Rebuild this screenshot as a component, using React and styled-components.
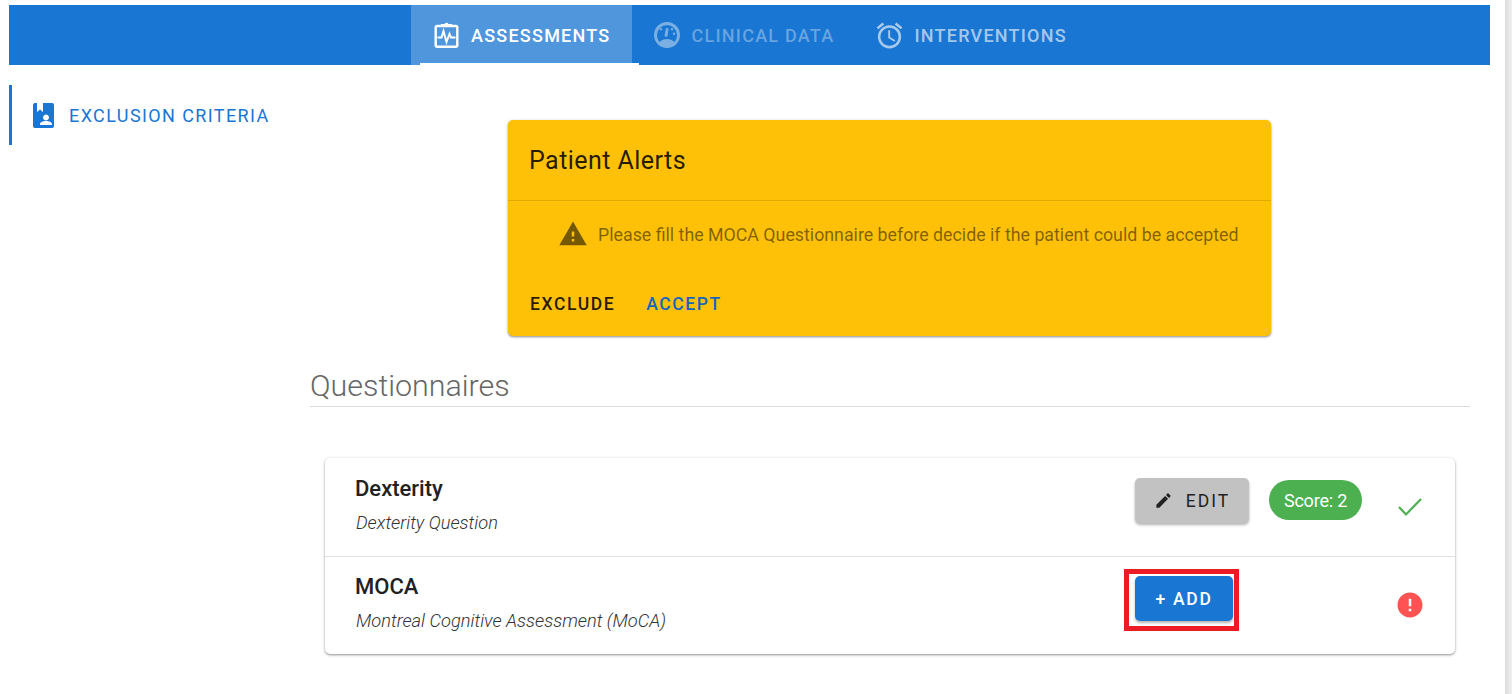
import React from "react";
import styled, { createGlobalStyle } from "styled-components";
import { MdAlarm, MdWarning, MdEdit, MdError } from "react-icons/md";

const Global = createGlobalStyle`
  html, body { margin: 0; padding: 0; height: 694px; overflow: hidden; background: #fff; font-family: Roboto, sans-serif; }
  * { box-sizing: border-box; }
`;
const Page = styled.div`
  width: 1512px; height: 694px; padding: 5px 22px 0 9px; position: relative;
`;
const ScrollTrack = styled.div`
  position: absolute; top: 0; bottom: 0; right: 0; width: 7px;
  background: linear-gradient(to right, #dcdcdc, #efefef);
`;
const NavBar = styled.nav`
  height: 60px; background: #1976d2; display: flex; justify-content: flex-start; padding-left: 402px;
`;
const Tab = styled.div`
  position: relative; height: 60px; display: flex; align-items: center; gap: 12px;
  padding: 0 ${p => p.$pr}px 0 ${p => p.$pl}px;
  font: 500 18px Roboto, sans-serif; letter-spacing: 1.24px; text-transform: uppercase;
  color: ${p => p.$color};
  background: ${p => p.$active ? "rgba(255,255,255,.24)" : "transparent"};
  svg { flex: none; }
`;
const Ink = styled.span`
  position: absolute; left: 9px; bottom: 0; width: 219px; height: 2px; background: #fff;
`;
const Body = styled.div`
  display: flex; padding-top: 20px;
`;
const Side = styled.aside`
  width: 301px; flex: none;
`;
const SideItem = styled.div`
  height: 60px; border-left: 3px solid #1976d2; display: flex; align-items: center; gap: 15px; padding: 1px 0 0 21px;
  font: 400 18px Roboto, sans-serif; letter-spacing: 1.4px; color: #1976d2;
`;
const Main = styled.main`
  width: 1160px; flex: none; display: flex; flex-direction: column;
`;
const Alert = styled.section`
  width: 763px; height: 216px; margin: 35px 0 0 198px; background: #ffc107; border-radius: 5px;
  box-shadow: 0 1px 3px rgba(0,0,0,.3), 0 1px 2px rgba(0,0,0,.2);
  display: flex; flex-direction: column;
`;
const AlertHead = styled.header`
  height: 81px; flex: none; padding: 1px 20px 0 21px; display: flex; align-items: center;
  border-bottom: 1px solid rgba(0,0,0,.12);
  font: 400 25px Roboto, sans-serif; letter-spacing: .45px; color: rgba(0,0,0,.87);
`;
const AlertBody = styled.div`
  height: 68px; padding: 0 0 2px 50px; display: flex; align-items: center; gap: 10px;
  font: 400 17.8px Roboto, sans-serif; color: rgba(0,0,0,.5);
  svg { color: rgba(0,0,0,.54); flex: none; }
`;
const AlertActions = styled.div`
  display: flex; gap: 31px; padding: 25px 0 0 22px;
`;
const TextBtn = styled.span`
  font: 500 17.5px Roboto, sans-serif; letter-spacing: 1.6px; color: ${p => p.$color};
`;
const Section = styled.h2`
  margin: 31px 0 0; height: 40px;
  font: 300 30.4px/38px Roboto, sans-serif; color: #666;
  border-bottom: 1px solid #ddd;
`;
const Card = styled.section`
  margin: 51px 15px 0; height: 196px; background: #fff; border-radius: 5px;
  box-shadow: 0 1px 3px rgba(0,0,0,.3), 0 1px 2px rgba(0,0,0,.18);
`;
const Row = styled.div`
  height: ${p => p.$last ? 97 : 99}px; display: grid; grid-template-columns: 780px 134px 1fr 60px; padding-left: 30px; position: relative;
  border-bottom: ${p => p.$last ? "none" : "1px solid #e0e0e0"};
`;
const Info = styled.div`
  padding-top: ${p => p.$top}px;
`;
const Name = styled.div`
  font: 500 22px/28px Roboto, sans-serif; color: #212121;
`;
const Sub = styled.div`
  margin-top: 8px; padding-left: 1px; font: italic 300 18.25px/24px Roboto, sans-serif; color: #333;
`;
const EditBtn = styled.div`
  margin-top: 20px; width: 114px; height: 45px; border-radius: 5px; background: #c2c2c2;
  display: flex; align-items: center; justify-content: center; gap: 13px;
  font: 400 17.5px Roboto, sans-serif; letter-spacing: 2px; color: #222;
  box-shadow: 0 2px 3px rgba(0,0,0,.3);
`;
const AddBtn = styled.div`
  margin-top: 19px; width: 98px; height: 45px; border-radius: 5px; background: #1976d2;
  display: flex; align-items: center; justify-content: center;
  font: 500 17.5px Roboto, sans-serif; letter-spacing: 1.7px; color: #fff;
  box-shadow: 0 2px 3px rgba(0,0,0,.3);
`;
const Highlight = styled.div`
  position: absolute; left: 799px; top: 12px; width: 115px; height: 62px; border: 5px solid #ed1c24;
`;
const Score = styled.div`
  margin: 22px 0 0 0; width: 93px; height: 40px; border-radius: 20px; background: #4caf50; color: #fff;
  display: flex; align-items: center; justify-content: center; font: 400 18px Roboto, sans-serif; letter-spacing: -.2px;
`;
const Status = styled.div`
  display: flex; justify-content: flex-start; padding: ${p => p.$top}px 0 0 ${p => p.$left}px; color: ${p => p.$color};
`;

const ClipboardPulse = () => (
  <svg width="25" height="26" viewBox="0 0 25 26" fill="none" stroke="#fff">
    <rect x="1.700" y="4" width="21.600" height="20.800" rx="1.500" strokeWidth="2.400" />
    <path d="M7.500 4.500V2.500h3.500a1.600 1.600 0 0 1 3 0h3.500v2z" fill="#fff" strokeWidth="1.200" />
    <path d="M3.500 15.500h4l2-6.500 3 11 3-8 1.500 3.500h4.500" strokeWidth="2" />
  </svg>
);
const Gauge = ({ color }) => (
  <svg width="26" height="26" viewBox="0 0 26 26" fill={color} opacity=".42">
    <path fillRule="evenodd" d="M13 0a13 13 0 1 1 0 26a13 13 0 1 1 0-26zM13 3a10 10 0 0 0-10 10c0 3 1 5 2.500 7c2-2 4.700-3 7.500-3s5.500 1 7.500 3c1.500-2 2.500-4 2.500-7a10 10 0 0 0-10-10zM12 6l2.500.5l-1 7.500a1.600 1.600 0 0 1-3-.5zM7 8.500a1.300 1.300 0 1 1 .01 0zM18 8.500a1.300 1.300 0 1 1 .01 0zM20 13a1.300 1.300 0 1 1 .01 0z" />
  </svg>
);
const BookUser = () => (
  <svg width="21" height="25" viewBox="0 0 21 25" fill="#1976d2">
    <path fillRule="evenodd" d="M2 0h2v9l3-2.500L10 9V0h9a2 2 0 0 1 2 2v21a2 2 0 0 1-2 2H2a2 2 0 0 1-2-2V2a2 2 0 0 1 2-2zM13 11.500a3 3 0 1 0 .01 0zM13 18c-3 0-6 1.300-6 3v1h12v-1c0-1.700-3-3-6-3z" />
  </svg>
);
const ThinCheck = () => (
  <svg width="24" height="20" viewBox="0 0 24 20" fill="none" stroke="currentColor" strokeWidth="2.200">
    <path d="M1 10l7 7.500L23 2" />
  </svg>
);

export default function App() {
  return (
    <Page>
      <Global />
      <NavBar>
        <Tab $active $color="#fff" $pl={23} $pr={21}><ClipboardPulse />Assessments<Ink /></Tab>
        <Tab $color="rgba(255,255,255,.34)" $pl={22} $pr={21}><Gauge color="#fff" />Clinical Data</Tab>
        <Tab $color="rgba(255,255,255,.62)" $pl={22} $pr={20}><MdAlarm size={31} style={{ margin: "0 -3px -1px -3px" }} />Interventions</Tab>
      </NavBar>
      <Body>
        <Side>
          <SideItem><BookUser />EXCLUSION CRITERIA</SideItem>
        </Side>
        <Main>
          <Alert>
            <AlertHead>Patient Alerts</AlertHead>
            <AlertBody><MdWarning size={30} />Please fill the MOCA Questionnaire before decide if the patient could be accepted</AlertBody>
            <AlertActions>
              <TextBtn $color="rgba(0,0,0,.87)">EXCLUDE</TextBtn>
              <TextBtn $color="#1565c0">ACCEPT</TextBtn>
            </AlertActions>
          </Alert>
          <Section>Questionnaires</Section>
          <Card>
            <Row>
              <Info $top={17}><Name>Dexterity</Name><Sub>Dexterity Question</Sub></Info>
              <EditBtn><MdEdit size={19} />EDIT</EditBtn>
              <Score>Score: 2</Score>
              <Status $top={39} $left={3} $color="#4caf50"><ThinCheck /></Status>
            </Row>
            <Row $last>
              <Info $top={16}><Name>MOCA</Name><Sub>Montreal Cognitive Assessment (MoCA)</Sub></Info>
              <AddBtn>+ ADD</AddBtn>
              <Highlight />
              <span />
              <Status $top={33} $left={0} $color="#ff5252"><MdError size={30} /></Status>
            </Row>
          </Card>
        </Main>
      </Body>
      <ScrollTrack />
    </Page>
  );
}
